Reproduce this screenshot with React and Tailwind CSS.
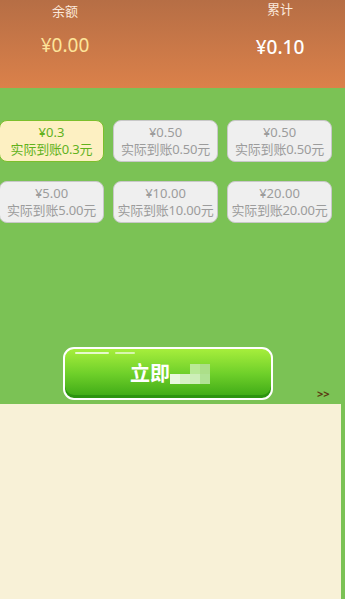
import React from "react";

const cards = [
  { p: "¥0.3", a: "实际到账0.3元", active: true },
  { p: "¥0.50", a: "实际到账0.50元" },
  { p: "¥0.50", a: "实际到账0.50元" },
  { p: "¥5.00", a: "实际到账5.00元" },
  { p: "¥10.00", a: "实际到账10.00元" },
  { p: "¥20.00", a: "实际到账20.00元" },
];

export default function App() {
  return (
    <div
      className="w-[345px] h-[599px] overflow-hidden bg-[#7bc255] flex flex-col"
      style={{ fontFamily: '"Noto Sans", "Noto Sans CJK SC", sans-serif' }}
    >
      <div className="h-[88px] bg-gradient-to-b from-[#b66e45] to-[#db814a] flex">
        <div className="w-[130px] flex flex-col items-center">
          <div className="text-[13px] leading-[18px] text-[#fbe9dc] mt-[2px]">余额</div>
          <div className="text-[19px] leading-[22px] text-[#fde49a] mt-[14px]">¥0.00</div>
        </div>
        <div className="flex-1" />
        <div className="w-[130px] flex flex-col items-center">
          <div className="text-[13px] leading-[18px] text-[#fbe9dc] mt-0">累计</div>
          <div className="text-[19px] leading-[22px] text-white mt-[18px] font-medium">¥0.10</div>
        </div>
      </div>

      <div className="w-[333px] grid grid-cols-3 gap-x-[9px] gap-y-[19px] mt-[32px] -ml-[1px]">
        {cards.map((c, i) => (
          <div
            key={i}
            className={
              "h-[42px] rounded-[8px] flex flex-col items-center justify-center " +
              (c.active
                ? "bg-[#fdf0c2] border-[1.5px] border-[#7cbf2c] text-[#62b21c]"
                : "bg-[#efefef] border-[1.5px] border-[#c8c8c8] text-[#9c9c9c]")
            }
          >
            <div className="text-[13px] leading-[17px]">{c.p}</div>
            <div className="text-[13px] leading-[17px] whitespace-nowrap tracking-[-0.2px]">{c.a}</div>
          </div>
        ))}
      </div>

      <div className="flex-1 flex flex-col justify-end">
        <div className="flex items-end pb-[4px]">
          <div className="ml-[63px] w-[210px] h-[53px] rounded-[11px] border-[2px] border-white bg-gradient-to-b from-[#a6ee3c] via-[#6fd02a] to-[#3aa815] shadow-[inset_0_-3px_0_#2c9410] relative flex items-center justify-center">
            <div className="absolute left-[10px] top-[3px] w-[34px] h-[1.5px] rounded-full bg-white/75" />
            <div className="absolute left-[50px] top-[3px] w-[20px] h-[1.5px] rounded-full bg-white/60" />
            <div className="flex items-center ml-[4px]">
              <span className="text-[20px] font-bold text-white leading-none">立即</span>
              <span className="flex flex-col">
                <span className="flex">
                  <span className="w-[10px] h-[10px]" />
                  <span className="w-[10px] h-[10px]" />
                  <span className="w-[10px] h-[10px] bg-[#b9e996]" />
                  <span className="w-[10px] h-[10px] bg-[#acdf89]" />
                </span>
                <span className="flex">
                  <span className="w-[10px] h-[10px] bg-[#e8f8de]" />
                  <span className="w-[10px] h-[10px] bg-[#d6f1c4]" />
                  <span className="w-[10px] h-[10px] bg-[#cdeeb8]" />
                  <span className="w-[10px] h-[10px] bg-[#b0e294]" />
                </span>
              </span>
            </div>
          </div>
          <div className="ml-[44px] mb-[1px] text-[11px] font-bold text-[#5b3c12] leading-none">&gt;&gt;</div>
        </div>
        <div className="flex h-[195px]">
          <div className="w-[341px] bg-[#f8f1d7]" />
        </div>
      </div>
    </div>
  );
}
